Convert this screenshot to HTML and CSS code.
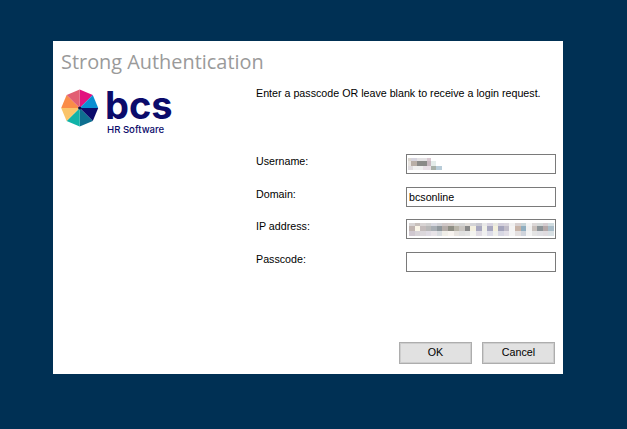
FILE: index.html
```html
<!DOCTYPE html>
<html lang="en">
<head>
<meta charset="utf-8">
<title>Strong Authentication</title>
<link rel="stylesheet" href="styles.css">
</head>
<body>
<main class="dialog">
  <h1 class="title">Strong Authentication</h1>
  <div class="content">
    <div class="logo">
      <svg class="mark" width="38" height="38" viewBox="-18.7 -19 38 38" aria-hidden="true">
        <polygon fill="#e2127f" points="0,0 0,-18.5 13.1,-13.1"/>
        <polygon fill="#0a8ed2" points="0,0 13.1,-13.1 18.5,0"/>
        <polygon fill="#0b0b6b" points="0,0 18.5,0 13.1,13.1"/>
        <polygon fill="#0e6f90" points="0,0 13.1,13.1 0,18.5"/>
        <polygon fill="#10b3a8" points="0,0 0,18.5 -13.1,13.1"/>
        <polygon fill="#fac46a" points="0,0 -13.1,13.1 -18.5,0"/>
        <polygon fill="#fa8c48" points="0,0 -18.5,0 -13.1,-13.1"/>
        <polygon fill="#e25f73" points="0,0 -13.1,-13.1 0,-18.5"/>
        <circle r="1.6" fill="#0b0b4b"/>
      </svg>
      <div class="brand">
        <span class="brand-name">bcs</span>
        <span class="brand-sub">HR Software</span>
      </div>
    </div>
    <div class="panel">
      <p class="prompt">Enter a passcode OR leave blank to receive a login request.</p>
      <form class="fields">
        <label class="label">Username:</label>
        <div class="input">
          <svg class="mosaic mosaic-short" width="34" height="12" shape-rendering="crispEdges" aria-hidden="true">
            <rect x="0" y="0" width="3" height="3" fill="#dcd8d0"/><rect x="3" y="0" width="6" height="3" fill="#d6d4de"/><rect x="9" y="0" width="10" height="3" fill="#e4e2e4"/><rect x="19" y="0" width="4" height="3" fill="#d8c8d0"/>
            <rect x="0" y="3" width="3" height="5" fill="#e8e4e0"/><rect x="3" y="3" width="6" height="5" fill="#b8aea6"/><rect x="9" y="3" width="10" height="5" fill="#8a8a88"/><rect x="19" y="3" width="4" height="5" fill="#c8b8c0"/><rect x="23" y="3" width="5" height="5" fill="#e4ecea"/>
            <rect x="0" y="8" width="5" height="4" fill="#e0dde0"/><rect x="5" y="8" width="10" height="4" fill="#f0f0f0"/><rect x="15" y="8" width="8" height="4" fill="#e8dfe6"/><rect x="23" y="8" width="5" height="4" fill="#a8b0a8"/><rect x="28" y="8" width="6" height="4" fill="#b8ccd8"/>
          </svg>
        </div>
        <label class="label">Domain:</label>
        <div class="input"><span class="value">bcsonline</span></div>
        <label class="label">IP address:</label>
        <div class="input">
          <svg class="mosaic" width="145" height="13" viewBox="0 0 26 13" preserveAspectRatio="none" shape-rendering="crispEdges" aria-hidden="true">
            <g>
              <rect x="0" y="0" width="1" height="3" fill="#d8d4d4"/><rect x="1" y="0" width="1" height="3" fill="#c8c0bc"/><rect x="2" y="0" width="1" height="3" fill="#d8d4d4"/><rect x="3" y="0" width="1" height="3" fill="#d0d0d0"/><rect x="4" y="0" width="1" height="3" fill="#d8d8e0"/><rect x="5" y="0" width="1" height="3" fill="#d0d0d4"/><rect x="6" y="0" width="1" height="3" fill="#d0c8c8"/><rect x="7" y="0" width="1" height="3" fill="#d4ccc8"/><rect x="8" y="0" width="1" height="3" fill="#d8d8d4"/><rect x="9" y="0" width="1" height="3" fill="#d4d4d4"/><rect x="10" y="0" width="1" height="3" fill="#e0dcd8"/><rect x="11" y="0" width="1" height="3" fill="#d4d4d8"/><rect x="12" y="0" width="1" height="3" fill="#c8c8d0"/>
              <rect x="13" y="0" width="1" height="3" fill="#e8e8e8"/><rect x="14" y="0" width="1" height="3" fill="#d8d4e0"/><rect x="15" y="0" width="1" height="3" fill="#e8e8e0"/><rect x="16" y="0" width="1" height="3" fill="#d4d0dc"/><rect x="17" y="0" width="1" height="3" fill="#d8d4dc"/><rect x="18" y="0" width="1" height="3" fill="#f0f0f0"/><rect x="19" y="0" width="1" height="3" fill="#d8d0d0"/><rect x="20" y="0" width="1" height="3" fill="#c8d4d8"/><rect x="21" y="0" width="1" height="3" fill="#f4f4f4"/><rect x="22" y="0" width="1" height="3" fill="#dcd8d8"/><rect x="23" y="0" width="1" height="3" fill="#d4d8d8"/><rect x="24" y="0" width="1" height="3" fill="#d4ccd0"/><rect x="25" y="0" width="1" height="3" fill="#d0dce0"/>
            </g>
            <g>
              <rect x="0" y="3" width="1" height="5" fill="#c0b4b0"/><rect x="1" y="3" width="1" height="5" fill="#fbf6e8"/><rect x="2" y="3" width="1" height="5" fill="#c4bcbc"/><rect x="3" y="3" width="1" height="5" fill="#b8b8b8"/><rect x="4" y="3" width="1" height="5" fill="#a8aeb4"/><rect x="5" y="3" width="1" height="5" fill="#8f979c"/><rect x="6" y="3" width="1" height="5" fill="#b4aca8"/><rect x="7" y="3" width="1" height="5" fill="#8e8e84"/><rect x="8" y="3" width="1" height="5" fill="#b8b4a8"/><rect x="9" y="3" width="1" height="5" fill="#c8c4c0"/><rect x="10" y="3" width="1" height="5" fill="#888888"/><rect x="11" y="3" width="1" height="5" fill="#f4f0e0"/><rect x="12" y="3" width="1" height="5" fill="#a8a8c0"/>
              <rect x="13" y="3" width="1" height="5" fill="#f0f0e8"/><rect x="14" y="3" width="1" height="5" fill="#a8a8c0"/><rect x="15" y="3" width="1" height="5" fill="#f4f0dc"/><rect x="16" y="3" width="1" height="5" fill="#a4a4bc"/><rect x="17" y="3" width="1" height="5" fill="#c0bcc8"/><rect x="18" y="3" width="1" height="5" fill="#f4f4f4"/><rect x="19" y="3" width="1" height="5" fill="#c8b4a8"/><rect x="20" y="3" width="1" height="5" fill="#90aec0"/><rect x="21" y="3" width="1" height="5" fill="#f0f0f0"/><rect x="22" y="3" width="1" height="5" fill="#c8c0bc"/><rect x="23" y="3" width="1" height="5" fill="#8c9498"/><rect x="24" y="3" width="1" height="5" fill="#b4a8a8"/><rect x="25" y="3" width="1" height="5" fill="#a8bcc8"/>
            </g>
            <g>
              <rect x="0" y="8" width="1" height="5" fill="#d0c8d0"/><rect x="1" y="8" width="1" height="5" fill="#d8d4d8"/><rect x="2" y="8" width="1" height="5" fill="#dcd8dc"/><rect x="3" y="8" width="1" height="5" fill="#e0dce4"/><rect x="4" y="8" width="1" height="5" fill="#e8e4e8"/><rect x="5" y="8" width="1" height="5" fill="#d8dce0"/><rect x="6" y="8" width="1" height="5" fill="#f0eee8"/><rect x="7" y="8" width="1" height="5" fill="#f8f4f0"/><rect x="8" y="8" width="1" height="5" fill="#e8e4e0"/><rect x="9" y="8" width="1" height="5" fill="#e0e0e0"/><rect x="10" y="8" width="1" height="5" fill="#e4e4e4"/><rect x="11" y="8" width="1" height="5" fill="#f4f4f0"/><rect x="12" y="8" width="1" height="5" fill="#e0dce4"/>
              <rect x="13" y="8" width="1" height="5" fill="#f0f0f0"/><rect x="14" y="8" width="1" height="5" fill="#dcdce8"/><rect x="15" y="8" width="1" height="5" fill="#f0f0ec"/><rect x="16" y="8" width="1" height="5" fill="#d8d8e4"/><rect x="17" y="8" width="1" height="5" fill="#e4e0e8"/><rect x="18" y="8" width="1" height="5" fill="#f4f4f4"/><rect x="19" y="8" width="1" height="5" fill="#e4e0e0"/><rect x="20" y="8" width="1" height="5" fill="#d0d4dc"/><rect x="21" y="8" width="1" height="5" fill="#f4f4f4"/><rect x="22" y="8" width="1" height="5" fill="#e4e4e4"/><rect x="23" y="8" width="1" height="5" fill="#e0e0e4"/><rect x="24" y="8" width="1" height="5" fill="#e0dce0"/><rect x="25" y="8" width="1" height="5" fill="#d8e0e4"/>
            </g>
          </svg>
        </div>
        <label class="label">Passcode:</label>
        <div class="input"></div>
      </form>
      <div class="actions">
        <button class="btn" type="button">OK</button>
        <button class="btn" type="button">Cancel</button>
      </div>
    </div>
  </div>
</main>
</body>
</html>
```
FILE: styles.css
```css
* { box-sizing: border-box; }
html, body { margin: 0; height: 100%; }
body { background: #003054; padding: 41px 0 0 53px; overflow: hidden; }
.dialog { width: 510px; height: 333px; background: #fff; display: flex; flex-direction: column; font-family: "Liberation Sans", Arial, sans-serif; font-size: 10.7px; color: #000; }
.title { margin: 0; padding: 6px 0 0 8px; height: 45px; font-family: "Open Sans", sans-serif; font-weight: 400; font-size: 19.9px; line-height: 29px; color: #9a9a9a; white-space: nowrap; }
.content { flex: 1; display: flex; min-height: 0; }
.logo { flex: none; width: 203px; padding: 3px 0 0 8px; display: flex; align-items: flex-start; gap: 6px; }
.mark { flex: none; }
.brand { display: flex; flex-direction: column; }
.brand-name { margin-top: -2px; font-family: "Inter", sans-serif; font-weight: 700; font-size: 38px; line-height: 37px; color: #0b0b6b; }
.brand-sub { margin: 0 0 0 2px; font-family: "Inter", sans-serif; font-weight: 500; font-size: 9.6px; line-height: 11px; color: #0b0b6b; }
.panel { flex: 1; min-width: 0; display: flex; flex-direction: column; padding: 0 8px 10px 0; }
.prompt { margin: 0; line-height: 14px; white-space: nowrap; }
.fields { margin-top: 54px; display: grid; grid-template-columns: 150px 150px; grid-auto-rows: 20px; row-gap: 12.67px; }
.label { line-height: 14px; }
.input { border: 1px solid #7a7a7a; background: #fff; height: 20px; padding: 1px 2px; display: flex; align-items: center; }
.value { color: #000; line-height: 14px; }
.mosaic { display: block; flex: none; }
.mosaic-short { margin-left: -1px; }
.actions { margin-top: auto; display: flex; justify-content: flex-end; gap: 10px; }
.btn { width: 73px; height: 22px; padding: 0 0 2px; border: 1px solid #adadad; box-shadow: inset 0 0 0 1px #cdcdcd; background: #e1e1e1; font-family: inherit; font-size: 10.7px; color: #000; }
```
